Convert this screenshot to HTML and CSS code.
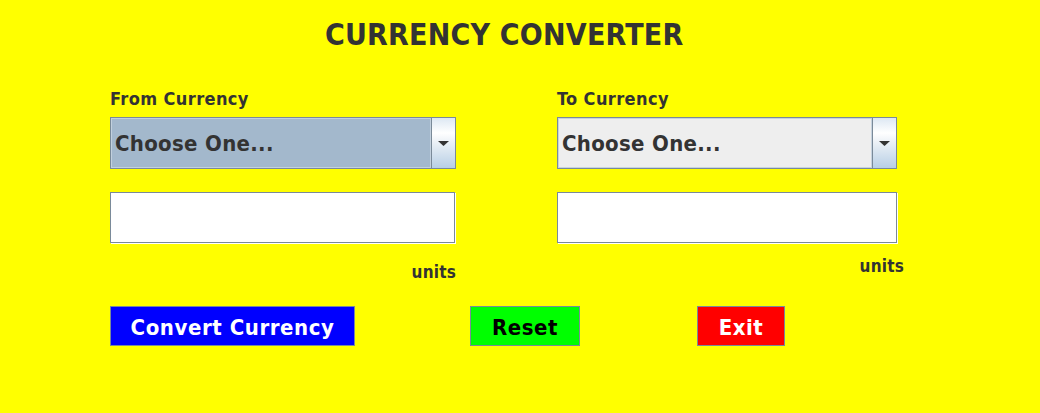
FILE: index.html
```html
<!DOCTYPE html>
<html lang="en">
<head>
<meta charset="utf-8">
<title>Currency Converter</title>
<link rel="stylesheet" href="styles.css">
</head>
<body>
<div class="app">
  <h1 class="title">CURRENCY CONVERTER</h1>
  <div class="cols">
    <div class="col col-left">
      <div class="label">From Currency</div>
      <div class="combo combo-focused">
        <div class="combo-text">Choose One...</div>
        <div class="combo-btn"><svg width="11" height="5" viewBox="0 0 11 5"><polygon points="0,0 11,0 5.5,5" fill="#333"/></svg></div>
      </div>
      <div class="field"></div>
      <div class="units">units</div>
    </div>
    <div class="col col-right">
      <div class="label">To Currency</div>
      <div class="combo">
        <div class="combo-text">Choose One...</div>
        <div class="combo-btn"><svg width="11" height="5" viewBox="0 0 11 5"><polygon points="0,0 11,0 5.5,5" fill="#333"/></svg></div>
      </div>
      <div class="field"></div>
      <div class="units units-right">units</div>
    </div>
  </div>
  <div class="buttons">
    <button class="btn btn-convert">Convert Currency</button>
    <button class="btn btn-reset">Reset</button>
    <button class="btn btn-exit">Exit</button>
  </div>
</div>
</body>
</html>
```

FILE: styles.css
```css
html, body {
  margin: 0;
  padding: 0;
  background: #ffff00;
}

body {
  font-family: "DejaVu Sans Condensed", "DejaVu Sans", sans-serif;
  font-stretch: condensed;
  font-weight: bold;
  color: #333333;
  width: 1040px;
  height: 413px;
  overflow: hidden;
}

.app {
  padding-left: 110px;
}

.title {
  margin: 0;
  padding-top: 17px;
  padding-left: 215px;
  font-size: 30px;
  line-height: 36px;
  letter-spacing: 0.2px;
  font-weight: bold;
  color: #333333;
}

.cols {
  display: flex;
  gap: 101px;
  margin-top: 35px;
}

.col-left {
  width: 346px;
}

.col-right {
  width: 347px;
}

.label {
  font-size: 18px;
  line-height: 22px;
  height: 22px;
  letter-spacing: 0.4px;
  white-space: nowrap;
}

.combo {
  margin-top: 7px;
  width: 340px;
  height: 52px;
  box-sizing: border-box;
  border: 1px solid #7a8a99;
  display: flex;
}

.col-left .combo {
  width: 346px;
}

.combo-text {
  flex: 1;
  box-sizing: border-box;
  border: 1px solid #c7d3df;
  background: #eeeeee;
  font-size: 22px;
  line-height: 46px;
  padding-top: 2px;
  letter-spacing: 0.3px;
  padding-left: 3px;
  white-space: nowrap;
}

.combo-focused .combo-text {
  background: #a3b8cc;
  border-color: #c2d0de;
}

.combo-btn {
  width: 24px;
  box-sizing: border-box;
  border-left: 1px solid #7a8a99;
  background: linear-gradient(to bottom, #dde8f3 0%, #ffffff 30%, #eaf0f6 50%, #b8cfe5 100%);
  display: flex;
  align-items: center;
  justify-content: center;
  padding-top: 1px;
}

.field {
  margin-top: 23px;
  height: 51px;
  box-sizing: border-box;
  border: 1px solid #7a8a99;
  background: #ffffff;
  box-shadow: 1px 1px 0 #ffffff;
}

.col-left .field {
  width: 345px;
}

.col-right .field {
  width: 340px;
}

.units {
  margin-top: 19px;
  font-size: 17px;
  line-height: 20px;
  letter-spacing: 0.2px;
  text-align: right;
}

.units-right {
  margin-top: 13px;
}

.buttons {
  display: flex;
  margin-top: 24px;
}

.btn {
  height: 40px;
  box-sizing: border-box;
  border: 1px solid #7a8a99;
  padding: 3px 0 0 0;
  margin: 0;
  font-family: inherit;
  font-stretch: condensed;
  font-weight: bold;
  font-size: 22px;
  line-height: 35px;
  letter-spacing: 0.55px;
  text-align: center;
  cursor: pointer;
}

.btn-convert {
  width: 245px;
  background: #0000ff;
  color: #ffffff;
}

.btn-reset {
  width: 110px;
  margin-left: 115px;
  background: #00ff00;
  color: #000000;
}

.btn-exit {
  width: 88px;
  margin-left: 117px;
  background: #ff0000;
  color: #ffffff;
}
```
